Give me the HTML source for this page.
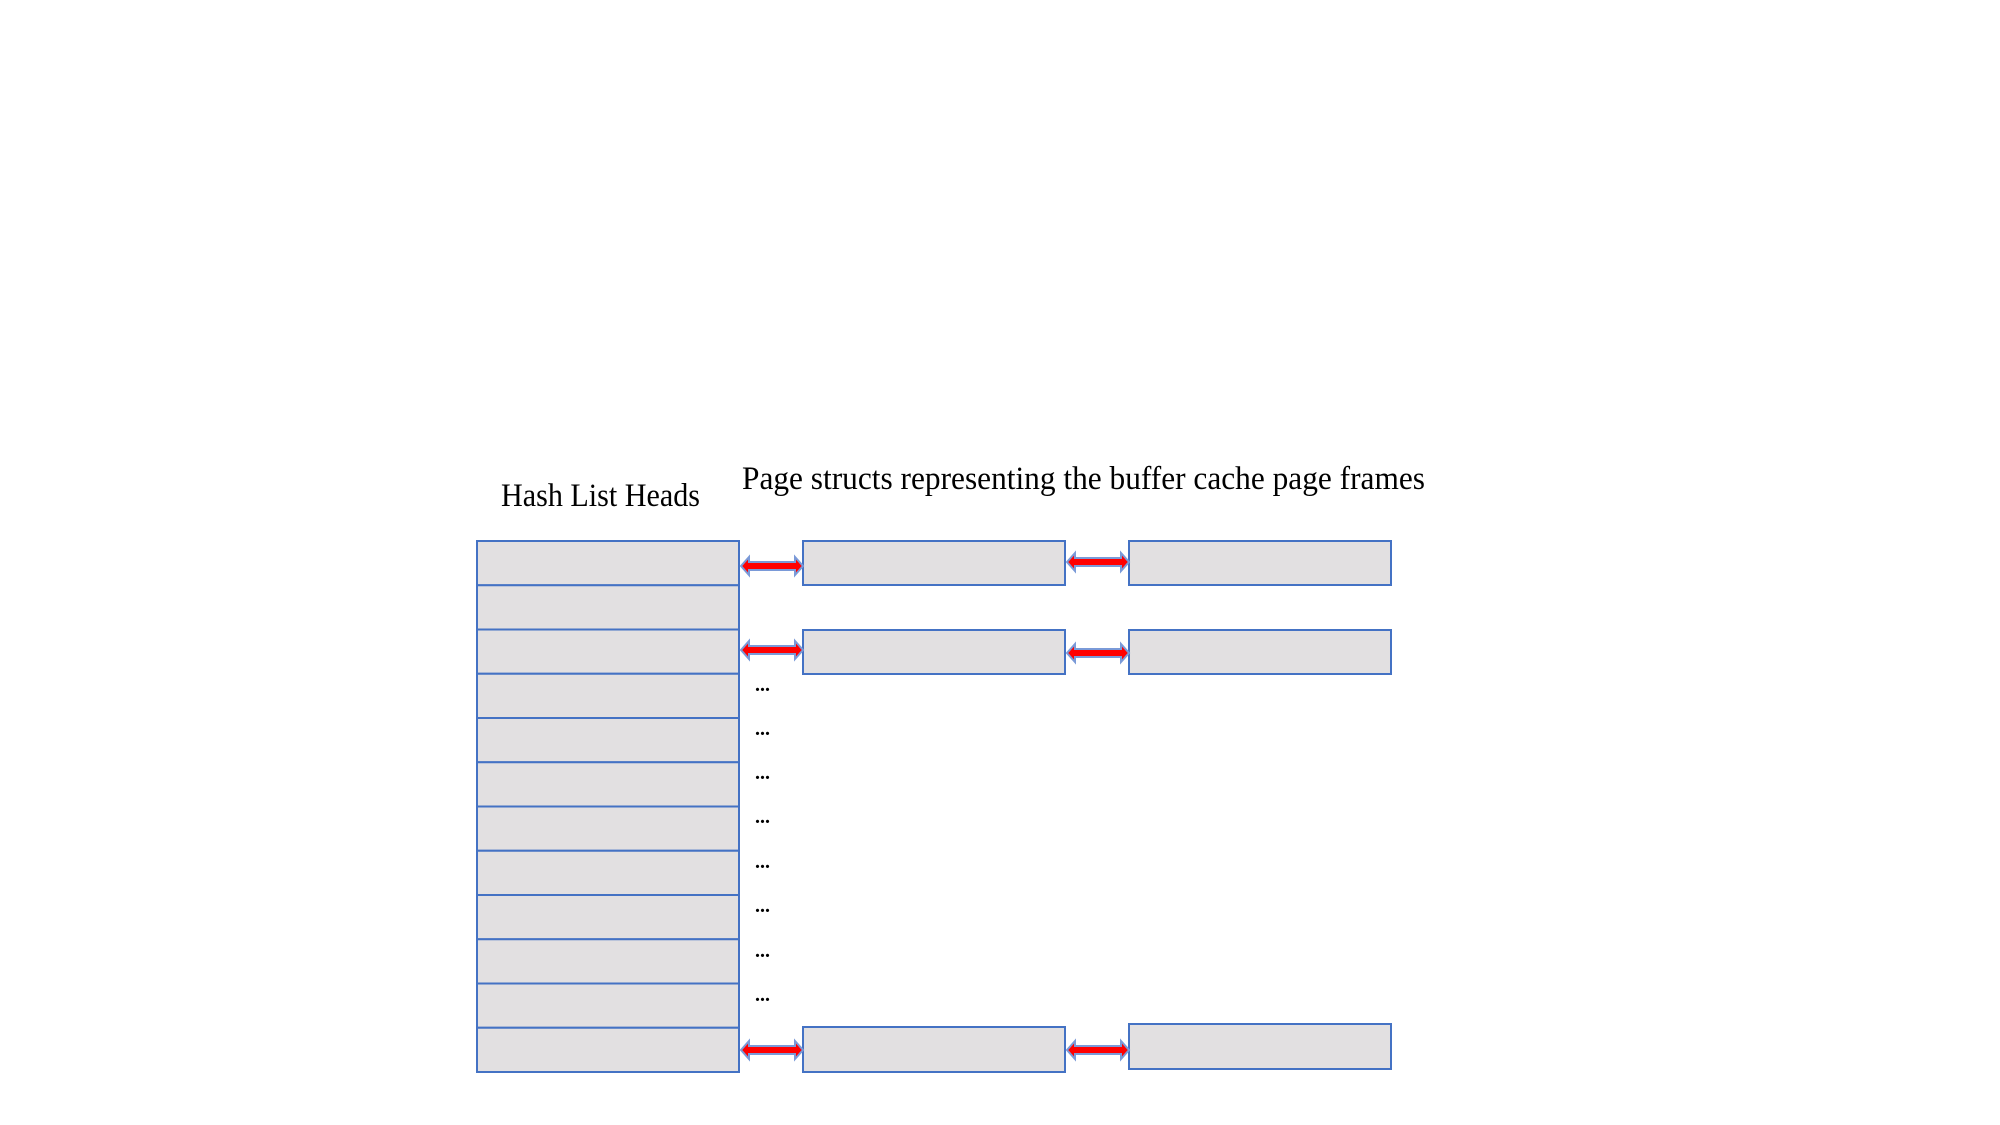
<!DOCTYPE html>
<html><head><meta charset="utf-8"><style>
html,body{margin:0;padding:0;background:#fff;}
svg{display:block;}
</style></head><body>
<svg width="2000" height="1125" viewBox="0 0 2000 1125" xmlns="http://www.w3.org/2000/svg">
<g font-family="Liberation Serif, serif" fill="#000">
<text x="501" y="506" font-size="33" textLength="199" lengthAdjust="spacingAndGlyphs">Hash List Heads</text>
<text x="742" y="489" font-size="33" textLength="683" lengthAdjust="spacingAndGlyphs">Page structs representing the buffer cache page frames</text>
</g>
<g fill="#E2E0E1" stroke="#4472C4" stroke-width="2">
<rect x="477" y="541" width="262" height="44.25"/>
<rect x="477" y="585.25" width="262" height="44.25"/>
<rect x="477" y="629.5" width="262" height="44.25"/>
<rect x="477" y="673.75" width="262" height="44.25"/>
<rect x="477" y="718" width="262" height="44.25"/>
<rect x="477" y="762.25" width="262" height="44.25"/>
<rect x="477" y="806.5" width="262" height="44.25"/>
<rect x="477" y="850.75" width="262" height="44.25"/>
<rect x="477" y="895" width="262" height="44.25"/>
<rect x="477" y="939.25" width="262" height="44.25"/>
<rect x="477" y="983.5" width="262" height="44.25"/>
<rect x="477" y="1027.75" width="262" height="44.25"/>
<rect x="803" y="541" width="262" height="44"/>
<rect x="803" y="630" width="262" height="44"/>
<rect x="803" y="1027" width="262" height="45"/>
<rect x="1129" y="541" width="262" height="44"/>
<rect x="1129" y="630" width="262" height="44"/>
<rect x="1129" y="1024" width="262" height="45"/>
</g>
<g fill="#FF0000" stroke="#7A9AD8" stroke-width="2" stroke-linejoin="miter">
<polygon points="741,566 749,557 749,562 795,562 795,557 803,566 795,575 795,570 749,570 749,575"/>
<polygon points="1067,562 1075,553 1075,558 1121,558 1121,553 1129,562 1121,571 1121,566 1075,566 1075,571"/>
<polygon points="741,650 749,641 749,646 795,646 795,641 803,650 795,659 795,654 749,654 749,659"/>
<polygon points="1067,653 1075,644 1075,649 1121,649 1121,644 1129,653 1121,662 1121,657 1075,657 1075,662"/>
<polygon points="741,1050 749,1041 749,1046 795,1046 795,1041 803,1050 795,1059 795,1054 749,1054 749,1059"/>
<polygon points="1067,1050 1075,1041 1075,1046 1121,1046 1121,1041 1129,1050 1121,1059 1121,1054 1075,1054 1075,1059"/>
</g>
<g font-family="Liberation Serif, serif" font-weight="bold" font-size="20" fill="#000">
<text x="755" y="691">...</text><text x="755" y="735">...</text><text x="755" y="779">...</text><text x="755" y="823">...</text>
<text x="755" y="868">...</text><text x="755" y="912">...</text><text x="755" y="957">...</text><text x="755" y="1001">...</text>
</g>
</svg>
</body></html>
